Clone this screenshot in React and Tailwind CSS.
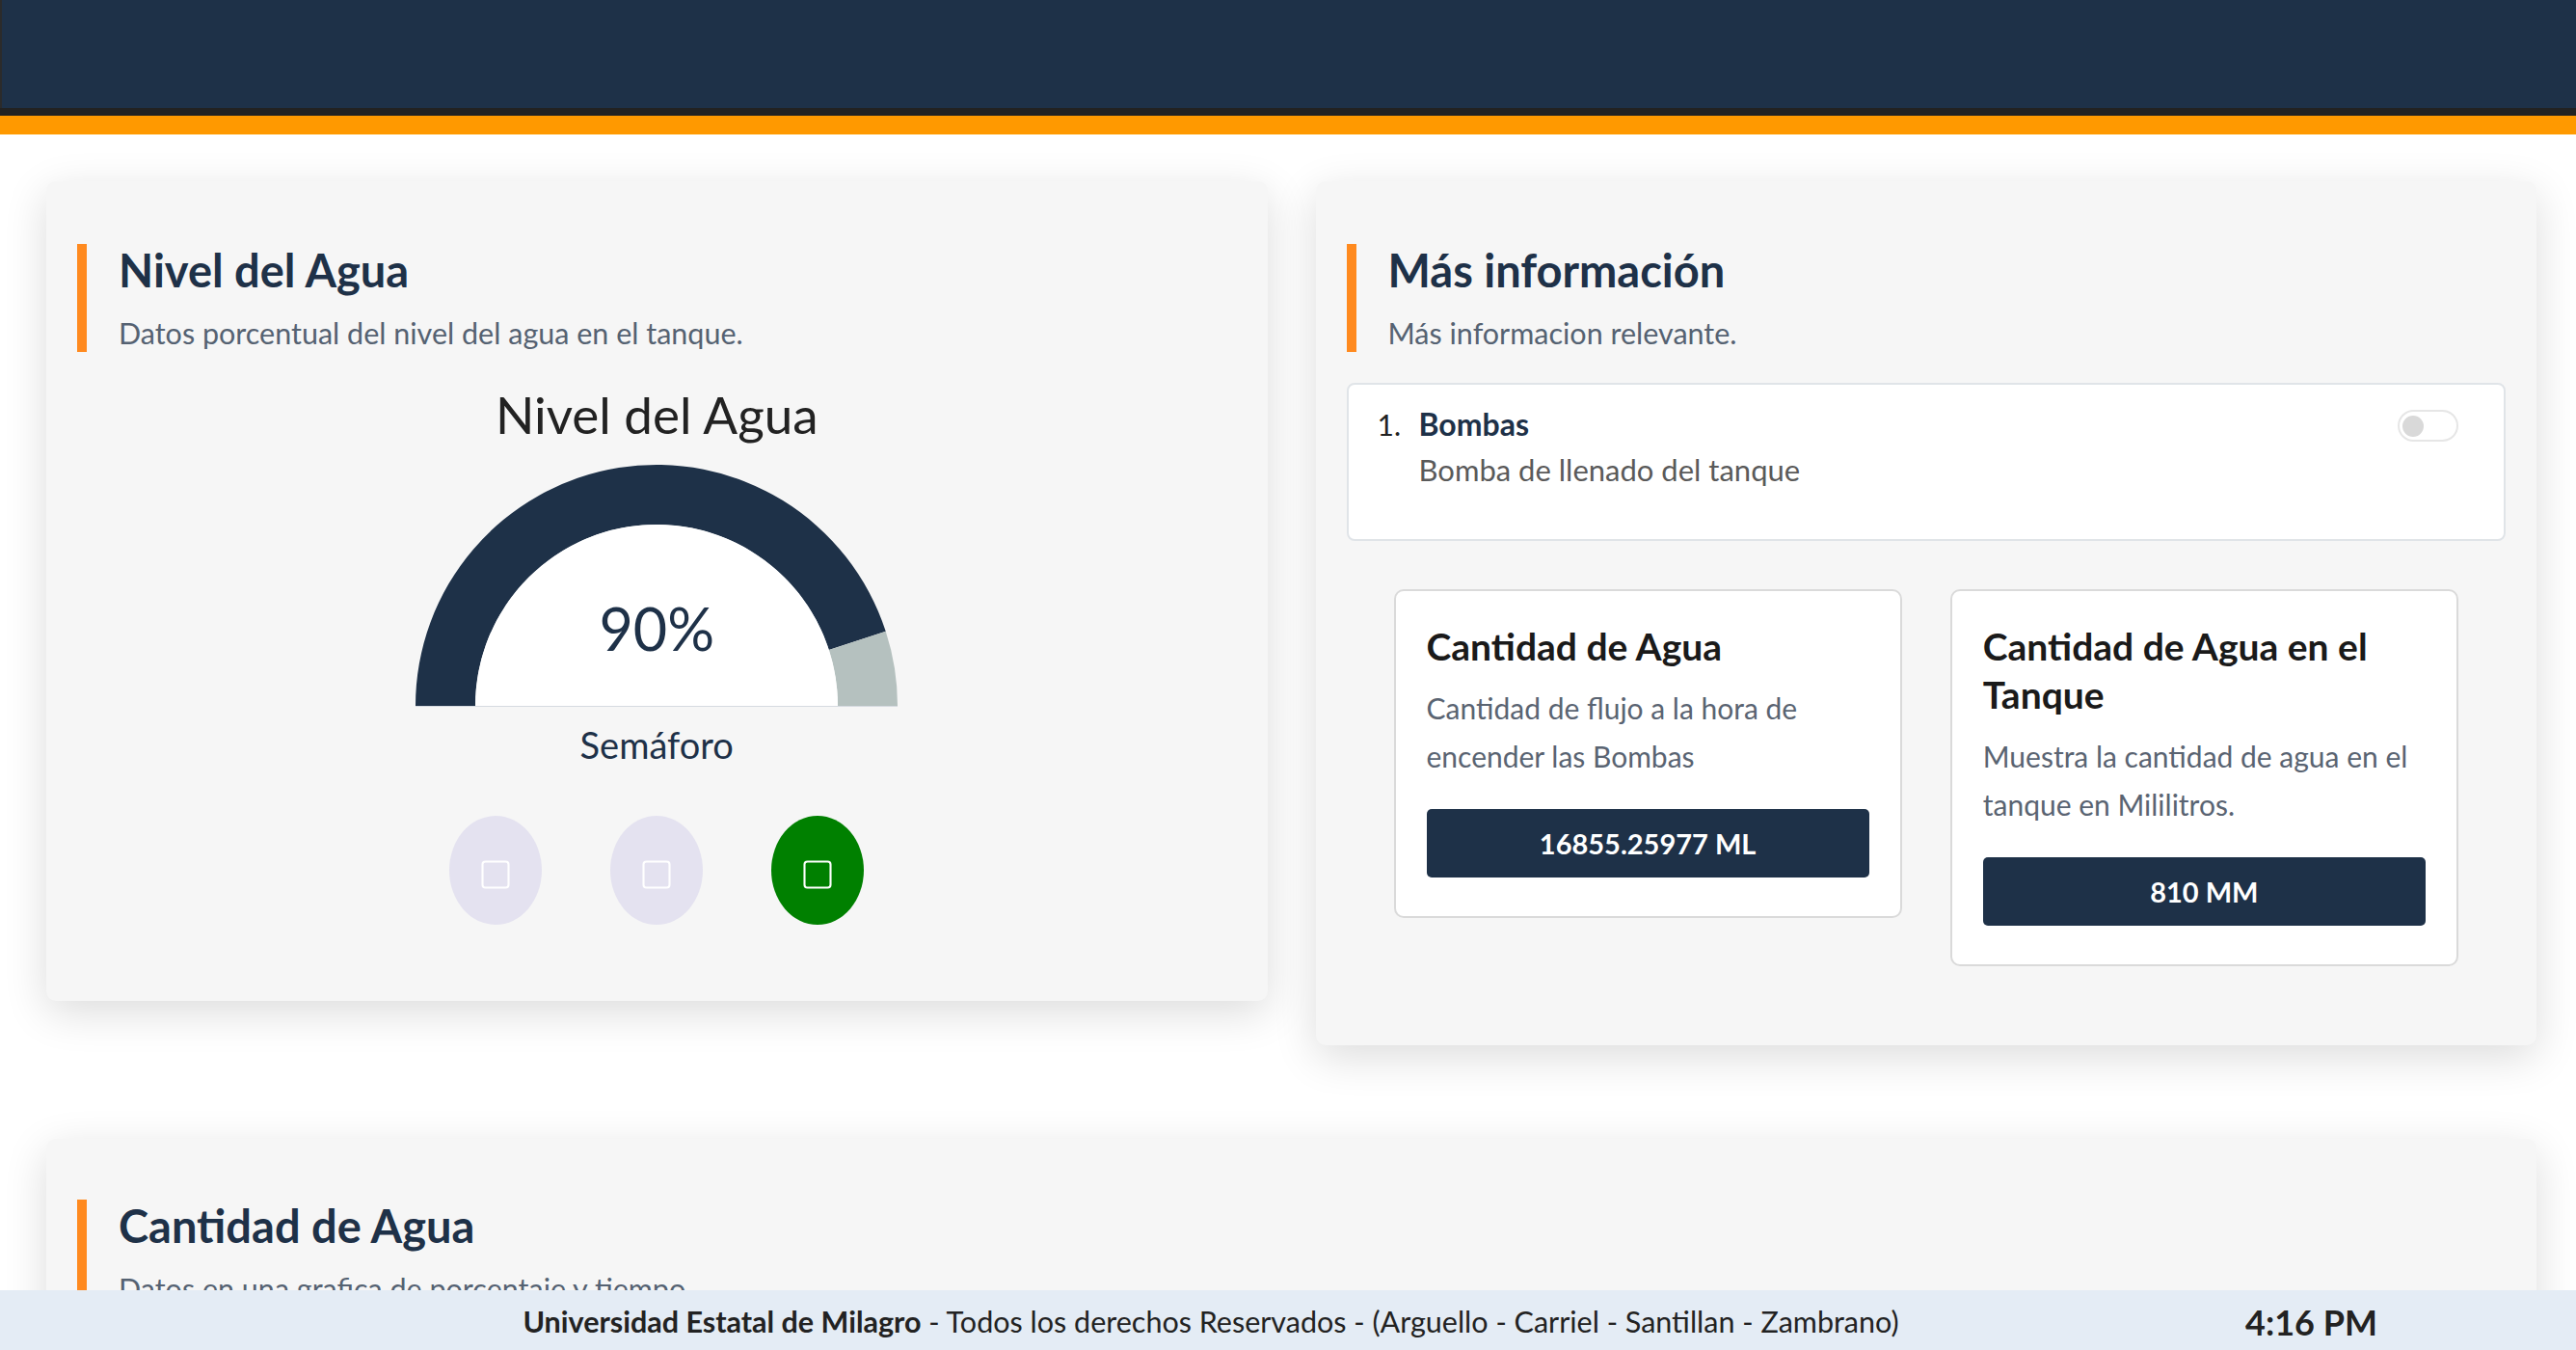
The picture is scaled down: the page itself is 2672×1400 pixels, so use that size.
import { Square } from "lucide-react";

const navy = "#1e3148";

function SectionHeader({ title, subtitle }) {
  return (
    <div className="border-l-[10px] border-[#ff8a1f] pl-[33px] h-[112px]">
      <h2 className="text-[47px] leading-[55px] font-bold text-[#1e3148]">{title}</h2>
      <p className="mt-[18px] text-[30.5px] leading-[38px] text-[#556272]">{subtitle}</p>
    </div>
  );
}

function Gauge({ value }) {
  return (
    <div className="relative w-[502px] h-[251px] mx-auto mt-[20px]">
      <svg width="502" height="251" viewBox="-1 0 502 251">
        <path
          d="M0 250 A250 250 0 0 1 487.76 172.75 L428.8 191.9 A188 188 0 0 0 62 250 Z"
          fill={navy}
        />
        <path
          d="M487.76 172.75 A250 250 0 0 1 500 250 L438 250 A188 188 0 0 0 428.8 191.9 Z"
          fill="#b5c1bf"
        />
        <path d="M62 250 A188 188 0 0 1 438 250 Z" fill="#ffffff" />
        <line x1="0" y1="250.5" x2="500" y2="250.5" stroke="#d6dbe0" strokeWidth="1" />
      </svg>
      <div className="absolute left-0 right-0 bottom-[46px] text-center text-[61px] leading-[70px] text-[#1e3148]">
        {value}%
      </div>
    </div>
  );
}

function Light({ on }) {
  return (
    <div
      className={`w-[96px] h-[113px] rounded-[50%] flex items-center justify-center pt-[8px] ${
        on ? "bg-[#008000]" : "bg-[#e4e2f0]"
      }`}
    >
      <Square size={36} strokeWidth={1.4} color="#ffffff" />
    </div>
  );
}

function InfoCard({ title, text, value }) {
  return (
    <div className="flex-1 bg-white border-2 border-[#dadada] rounded-[10px] px-[32px] pt-[32px] pb-[40px]">
      <h3 className="text-[39px] leading-[50px] font-bold text-[#1a1a1a]">{title}</h3>
      <p className="mt-[14px] text-[30px] leading-[50px] text-[#5a6472]">{text}</p>
      <div className="mt-[30px] h-[71px] rounded-[5px] bg-[#1e3148] flex items-center justify-center text-white font-bold text-[29px]">
        {value}
      </div>
    </div>
  );
}

export default function App() {
  return (
    <div className="h-screen flex flex-col bg-white overflow-hidden font-['Lato',sans-serif]">
      {/* Top bar */}
      <div className="h-[112px] bg-[#1e3148] border-l-2 border-[#2b2b2b]" />
      <div className="h-[8px] bg-[#222222]" />
      <div className="h-[20px] bg-[#ff9900] border-b border-[#ffd38a]" />

      <main className="flex-1 overflow-hidden pl-[48px] pr-[41px] pt-[48px]">
        <div className="grid grid-cols-2 gap-[50px] items-start">
          {/* Nivel del agua */}
          <section className="bg-[#f6f6f6] rounded-[10px] shadow-[0_12px_45px_rgba(0,0,0,0.14)] pt-[65px] px-[32px] pb-[79px]">
            <SectionHeader
              title="Nivel del Agua"
              subtitle="Datos porcentual del nivel del agua en el tanque."
            />
            <div className="mt-[33px] text-center text-[53px] leading-[64px] text-[#222222]">
              Nivel del Agua
            </div>
            <Gauge value={90} />
            <div className="mt-[18px] text-center text-[38px] leading-[42px] text-[#1e3148]">
              Semáforo
            </div>
            <div className="mt-[53px] flex justify-center gap-[71px]">
              <Light />
              <Light />
              <Light on />
            </div>
          </section>

          {/* Más información */}
          <section className="bg-[#f6f6f6] rounded-[10px] shadow-[0_12px_45px_rgba(0,0,0,0.14)] pt-[65px] px-[32px] pb-[82px]">
            <SectionHeader title="Más información" subtitle="Más informacion relevante." />
            <div className="mt-[32px] h-[164px] bg-white border-2 border-[#e0e4e8] rounded-[8px] pl-[30px] pr-[47px] pt-[23px] flex items-start">
              <span className="w-[43px] text-[30px] leading-[36px] text-[#222222]">1.</span>
              <div className="flex-1">
                <div className="text-[32px] leading-[36px] font-bold text-[#1e3148]">Bombas</div>
                <div className="mt-[11px] text-[31px] leading-[36px] text-[#5a5a5a]">
                  Bomba de llenado del tanque
                </div>
              </div>
              <div className="mt-[3px] w-[63px] h-[33px] rounded-full border-2 border-[#e6e6e6] bg-white flex items-center pl-[3px]">
                <div className="w-[22px] h-[22px] rounded-full bg-[#d9d9d9]" />
              </div>
            </div>
            <div className="mt-[50px] mx-[49px] flex gap-[50px] items-start">
              <InfoCard
                title="Cantidad de Agua"
                text="Cantidad de flujo a la hora de encender las Bombas"
                value="16855.25977 ML"
              />
              <InfoCard
                title="Cantidad de Agua en el Tanque"
                text="Muestra la cantidad de agua en el tanque en Mililitros."
                value="810 MM"
              />
            </div>
          </section>
        </div>

        {/* Cantidad de agua */}
        <section className="mt-[97px] bg-[#f6f6f6] rounded-[10px] shadow-[0_12px_45px_rgba(0,0,0,0.14)] pt-[63px] px-[32px] pb-[300px]">
          <SectionHeader
            title="Cantidad de Agua"
            subtitle="Datos en una grafica de porcentaje y tiempo"
          />
        </section>
      </main>

      <footer className="h-[62px] shrink-0 bg-[#e4ecf5] flex items-center pt-[3px] text-[#222222]">
        <div className="ml-[183px] w-[2146px] text-center text-[30.5px]">
          <span className="font-bold">Universidad Estatal de Milagro</span> - Todos los derechos
          Reservados - (Arguello - Carriel - Santillan - Zambrano)
        </div>
        <div className="font-bold text-[36px]">4:16 PM</div>
      </footer>
    </div>
  );
}
